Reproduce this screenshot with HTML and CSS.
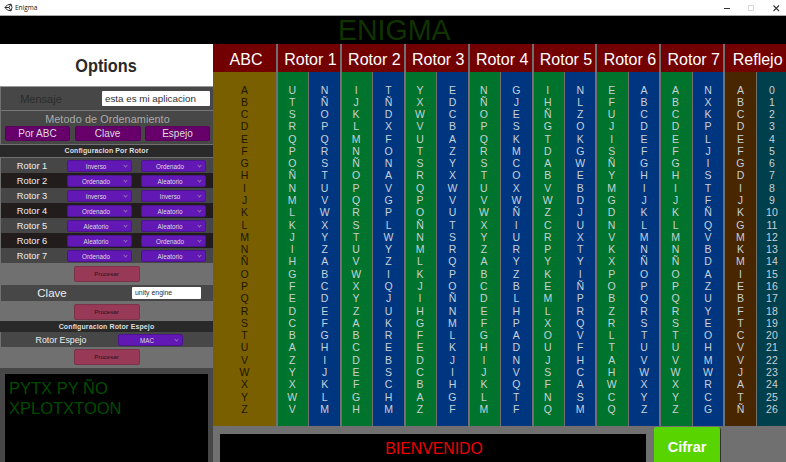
FILE: index.html
```html
<!DOCTYPE html>
<html lang="es">
<head>
<meta charset="utf-8">
<title>Enigma</title>
<link rel="stylesheet" href="styles.css">
</head>
<body>
<header class="titlebar">
  <svg class="logo" viewBox="0 0 18 18"><path d="M2 9 7 3.800 14 2.200 16 9 14 15.800 7 14.200Z M2 9H10L14 2.200M10 9L14 15.800" fill="none" stroke="#222" stroke-width="1.900"/></svg>
  <span class="app-name">Enigma</span>
  <svg class="controls" viewBox="0 0 60 14"><path d="M2 7.500H8" stroke="#333" stroke-width="1"/><rect x="26.500" y="4.500" width="5" height="5" fill="none" stroke="#d8d8d8"/><path d="M51.500 4.500 57 10M57 4.500 51.500 10" stroke="#333" stroke-width="1.100"/></svg>
</header>
<div class="banner"><span>ENIGMA</span></div>
<div class="app">
  <aside class="sidebar">
    <h1 class="options"><span>Options</span></h1>
    <div class="message"><span>Mensaje</span><div class="input">esta es mi aplicacion</div></div>
    <div class="method">
      <div class="method-title">Metodo de Ordenamiento</div>
      <div class="method-buttons"><button>Por ABC</button><button>Clave</button><button>Espejo</button></div>
    </div>
    <h2 class="heading first">Configuracion Por Rotor</h2>
    <div class="rotors">
      <div class="rotor"><span>Rotor 1</span><div class="select">Inverso<i></i></div><div class="select">Ordenado<i></i></div></div>
      <div class="rotor"><span>Rotor 2</span><div class="select">Ordenado<i></i></div><div class="select">Aleatorio<i></i></div></div>
      <div class="rotor"><span>Rotor 3</span><div class="select">Inverso<i></i></div><div class="select">Inverso<i></i></div></div>
      <div class="rotor"><span>Rotor 4</span><div class="select">Ordenado<i></i></div><div class="select">Aleatorio<i></i></div></div>
      <div class="rotor"><span>Rotor 5</span><div class="select">Aleatorio<i></i></div><div class="select">Aleatorio<i></i></div></div>
      <div class="rotor"><span>Rotor 6</span><div class="select">Aleatorio<i></i></div><div class="select">Ordenado<i></i></div></div>
      <div class="rotor"><span>Rotor 7</span><div class="select">Ordenado<i></i></div><div class="select">Aleatorio<i></i></div></div>
    </div>
    <div class="process"><button>Procesar</button></div>
    <div class="key"><span>Clave</span><div class="input small">unity engine</div></div>
    <div class="process second"><button>Procesar</button></div>
    <h2 class="heading">Configuracion Rotor Espejo</h2>
    <div class="mirror"><span>Rotor Espejo</span><div class="select">MAC<i></i></div></div>
    <div class="process third"><button>Procesar</button></div>
    <div class="output-wrap"><div class="output">PYTX PY ÑO<br>XPLOTXTOON</div></div>
  </aside>
  <main class="board">
    <div class="table">
      <section class="group abc"><h3>ABC</h3><div class="cols"><div class="col gold"><p>A B C D E F G H I J K L M N Ñ O P Q R S T U V W X Y Z</p></div></div></section>
      <section class="group"><h3>Rotor 1</h3><div class="cols"><div class="col green"><p>U T S R Q P O Ñ N M L K J I H G F E D C B A Z Y X W V</p></div><div class="col blue"><p>N Ñ O P Q R S T U V W X Y Z A B C D E F G H I J K L M</p></div></div></section>
      <section class="group"><h3>Rotor 2</h3><div class="cols"><div class="col green"><p>I J K L M N Ñ O P Q R S T U V W X Y Z A B C D E F G H</p></div><div class="col blue"><p>T Ñ D X F O N A V G P L W Y Z I Q J U K R E B S C H M</p></div></div></section>
      <section class="group"><h3>Rotor 3</h3><div class="cols"><div class="col green"><p>Y X W V U T S R Q P O Ñ N M L K J I H G F E D C B A Z</p></div><div class="col blue"><p>E D C B A Z Y X W V U T S R Q P O Ñ N M L K J I H G F</p></div></div></section>
      <section class="group"><h3>Rotor 4</h3><div class="cols"><div class="col green"><p>N Ñ O P Q R S T U V W X Y Z A B C D E F G H I J K L M</p></div><div class="col blue"><p>G J E S K M C O X W Ñ I U R Y Z B L H P A D N V Q T F</p></div></div></section>
      <section class="group"><h3>Rotor 5</h3><div class="cols"><div class="col green"><p>I H Ñ G T D A B V W Z C R P Y K E M L X O U J S F N Q</p></div><div class="col blue"><p>N L Z O K G W E B D J U X T Y I Ñ P R Q V F H C A S M</p></div></div></section>
      <section class="group"><h3>Rotor 6</h3><div class="cols"><div class="col green"><p>E F U J I S Ñ Y M G D N V K X P O B Z R L T A H W C Q</p></div><div class="col blue"><p>A B C D E F G H I J K L M N Ñ O P Q R S T U V W X Y Z</p></div></div></section>
      <section class="group"><h3>Rotor 7</h3><div class="cols"><div class="col green"><p>A B C D E F G H I J K L M N Ñ O P Q R S T U V W X Y Z</p></div><div class="col blue"><p>N X K P L J I S T F Ñ Q V B D A Z U Y E O H M W R C G</p></div></div></section>
      <section class="group"><h3>Reflejo</h3><div class="cols"><div class="col brown"><p>A B C D E F G D I J K G M K M I E B F T C V V J A T Ñ</p></div><div class="col teal"><p>0 1 2 3 4 5 6 7 8 9 10 11 12 13 14 15 16 17 18 19 20 21 22 23 24 25 26</p></div></div></section>
    </div>
    <footer class="bottom"><div class="welcome">BIENVENIDO</div><button class="cipher">Cifrar</button></footer>
  </main>
</div>
</body>
</html>
```
FILE: styles.css
```css
* { box-sizing: border-box; }
body { margin: 0; width: 786px; height: 462px; overflow: hidden; background: #000; font-family: "Liberation Sans", Arial, sans-serif; }
h1, h2, h3, p { margin: 0; }
button { border: 0; padding: 0; font-family: inherit; }

.titlebar { display: flex; align-items: center; height: 16px; padding: 0 4px; background: #fff; border-bottom: 1px solid #aaa; }
.logo { width: 9px; height: 9px; }
.app-name { margin-left: 2px; font: 6.5px/14px "Open Sans", "Noto Sans", sans-serif; color: #111; }
.controls { width: 60px; height: 14px; margin-left: auto; }
.banner { height: 28px; padding-left: 3px; text-align: center; font-size: 30px; line-height: 27px; color: #103300; }
.banner span { display: inline-block; transform: scaleX(.95); }
.app { display: flex; height: 418px; background: #707070; }

.sidebar { display: flex; flex-direction: column; width: 213px; flex: none; background: #707070; color: #eee; }
.options { height: 43px; background: #fff; border-bottom: 1px solid #999; color: #292929; font-size: 17.5px; line-height: 45px; text-align: center; }
.options span { display: inline-block; transform: scaleX(.93); }
.message { display: flex; align-items: center; height: 24px; margin-left: 1px; background: #474747; border-bottom: 1px solid #777; }
.message span { width: 80px; text-align: center; font-size: 11px; color: #2c2c2c; }
.input { width: 108px; height: 15px; margin-left: 21px; padding-left: 3px; background: #fff; border-radius: 1px; color: #303030; font-size: 9.8px; line-height: 16px; white-space: nowrap; }
.method { height: 34px; margin-left: 1px; padding: 1px 3px 0 4px; background: #474747; border-bottom: 1px solid #707070; }
.method-title { height: 14px; text-align: center; font-size: 10.8px; line-height: 14px; color: #aaa; letter-spacing: .1px; }
.method-buttons { display: grid; grid-template-columns: 65px 66px 65px; gap: 4.500px; }
.method-buttons button { height: 15px; background: #68006c; border: 1px solid #570059; border-radius: 2px; color: #ddd; font-size: 10px; line-height: 14px; }
.heading { height: 11px; background: #292929; font-size: 7px; line-height: 12px; text-align: center; color: #ddd; letter-spacing: .1px; }
.heading.first { height: 12px; }
.rotors { display: grid; grid-template-rows: repeat(7, 15px); height: 106px; padding: 1px 0 0 1px; }
.rotor { display: flex; align-items: center; background: #464646; }
.rotor:nth-child(even) { background: #231c1c; }
.rotor span { width: 62px; margin-right: 4px; text-align: center; font-size: 9.3px; }
.select { position: relative; width: 65px; height: 12px; margin-right: 9px; padding-right: 7px; background: #6218b4; border: 1px solid #4b168b; border-radius: 2px; font-size: 6.3px; line-height: 11px; text-align: center; color: #ddd; }
.select i { position: absolute; right: 4px; top: 3px; width: 3px; height: 3px; border: solid #9270b4; border-width: 0 .8px .8px 0; transform: rotate(45deg); }
.process { display: flex; justify-content: center; height: 22px; padding-top: 3px; background: #707070; }
.process button { width: 66px; height: 16px; background: #983a57; border: 1px solid #7b334a; border-radius: 2px; font-size: 6.1px; line-height: 14px; color: #24101a; }
.process.second { height: 20px; padding-top: 3px; }
.process.third { height: 21px; padding-top: 2px; }
.key { display: flex; align-items: center; height: 16px; margin-left: 1px; background: #474747; }
.key span { width: 102px; text-align: center; font-size: 11.5px; }
.input.small { width: 69px; height: 12px; margin-left: 29px; font-size: 6.9px; line-height: 12px; }
.mirror { display: flex; align-items: center; height: 15px; margin-left: 1px; background: #474747; }
.mirror span { width: 117px; padding-left: 3px; text-align: center; font-size: 8.8px; }
.mirror .select { margin-left: 0; }
.output-wrap { flex: 1; padding: 6px 5px 0; background: #474747; }
.output { height: 100%; padding: 5px 4px; background: #000; font-size: 16.5px; line-height: 19.5px; color: #004c00; }

.board { flex: 1; min-width: 0; overflow: hidden; }
.table { display: grid; grid-template-columns: 64px repeat(8, 63.900px); width: 575.200px; height: 382px; background: #707070; }
.group { border-right: 1px solid #707070; }
.group h3 { height: 28px; padding-left: 3px; background: #720000; font-weight: 400; font-size: 16px; line-height: 31px; text-align: center; white-space: nowrap; color: #fff; }
.group:not(.abc) { border-left: 1px solid #707070; }
.cols { display: grid; grid-template-columns: 1fr 1fr; gap: 1px; height: 354px; }
.abc .cols { grid-template-columns: 1fr; }
.col { display: flex; justify-content: center; padding-top: 11.500px; color: #c8d1d8; }
.col p { width: min-content; text-align: center; font-size: 10.5px; line-height: 12.280px; }
.gold { background: #7a5f00; color: #1c1600; }
.green { background: #00742c; padding-right: 2px; }
.blue { background: #003680; }
.brown { background: #472600; }
.teal { background: #00404c; }
.bottom { display: flex; height: 36px; background: #707070; }
.welcome { width: 426px; height: 28px; margin: 8px 0 0 7px; padding-left: 2px; background: #000; color: #ee0000; font-size: 15.8px; line-height: 29px; text-align: center; }
.cipher { width: 66px; height: 35px; margin: 1px 0 0 8px; background: #58d400; border-radius: 2px 2px 0 0; box-shadow: 1px 1px 0 #333; color: #fff; font-size: 14.5px; font-weight: 700; line-height: 41px; }
```
